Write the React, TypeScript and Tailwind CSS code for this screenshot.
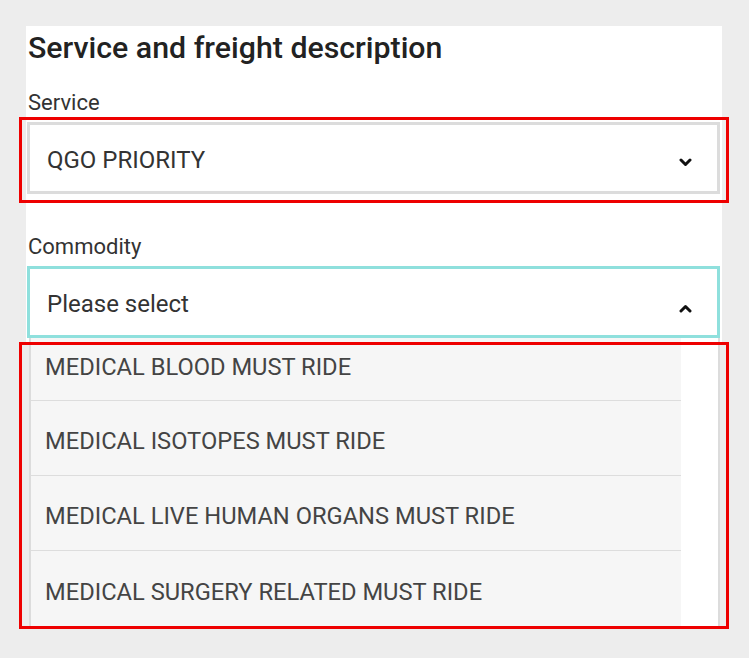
import React from "react";

function ChevronDown() {
  return (
    <svg width="13" height="9" viewBox="0 0 13 9" className="block mt-[5px]">
      <polyline points="2,2 6.5,6.5 11,2" fill="none" stroke="#111" strokeWidth="3" strokeLinecap="round" strokeLinejoin="round" />
    </svg>
  );
}

function ChevronUp() {
  return (
    <svg width="13" height="9" viewBox="0 0 13 9" className="block mt-[8px]">
      <polyline points="2,7 6.5,2.5 11,7" fill="none" stroke="#111" strokeWidth="3" strokeLinecap="round" strokeLinejoin="round" />
    </svg>
  );
}

const items = [
  "MEDICAL BLOOD MUST RIDE",
  "MEDICAL ISOTOPES MUST RIDE",
  "MEDICAL LIVE HUMAN ORGANS MUST RIDE",
  "MEDICAL SURGERY RELATED MUST RIDE",
];

export default function App() {
  return (
    <div className="relative min-h-[658px] w-[749px] bg-[#ededed] pl-[26px] pt-[26px] font-[family-name:Roboto,sans-serif]">
      <div className="w-[696px] bg-white pl-px pr-[2px] pt-[4px] pb-[4px]">
        <h2 className="text-[30.3px] leading-[36px] font-medium text-[#222222] pl-px">
          Service and freight description
        </h2>
        <div className="mt-[23px] text-[22px] leading-[28px] text-[#333333] pl-px">Service</div>
        <div className="mt-[5px] h-[72px] border-[3px] border-[#dcdcdc] flex items-center justify-between pl-[17px] pr-[25px] pt-[4px]">
          <span className="text-[24px] text-[#333333]">QGO PRIORITY</span>
          <ChevronDown />
        </div>
        <div className="mt-[39px] text-[22px] leading-[28px] text-[#333333] pl-px">Commodity</div>
        <div className="relative mt-[5px]">
          <div className="h-[72px] border-[3px] border-[#8fe0dd] flex items-center justify-between pl-[17px] pr-[25px] pt-[4px]">
            <span className="text-[24px] text-[#333333]">Please select</span>
            <ChevronUp />
          </div>
          <div className="absolute left-[2px] top-full w-[691px] h-[288px] flex border-l-2 border-r-2 border-[#dcdcdc] bg-white z-10">
            <div className="w-[650px] bg-[#f6f6f6] flex flex-col">
              {items.map((it, i) => (
                <div
                  key={it}
                  className={
                    i === 0
                      ? "h-[63px] border-b border-[#dddddd] pb-[3px] flex items-center pl-[14px] text-[23.7px] text-[#444444]"
                      : i === 3
                      ? "h-[75px] pt-[8px] flex items-center pl-[14px] text-[23.7px] text-[#444444]"
                      : "h-[75px] border-b border-[#dddddd] pt-[8px] flex items-center pl-[14px] text-[23.7px] text-[#444444]"
                  }
                >
                  {it}
                </div>
              ))}
            </div>
            <div className="flex-1 bg-white" />
          </div>
        </div>
      </div>
      <div className="absolute left-[19px] top-[117px] w-[710px] h-[86px] border-[3px] border-[#ee0000] pointer-events-none z-20" />
      <div className="absolute left-[19px] top-[342px] w-[710px] h-[287px] border-[3px] border-[#ee0000] pointer-events-none z-20" />
    </div>
  );
}
